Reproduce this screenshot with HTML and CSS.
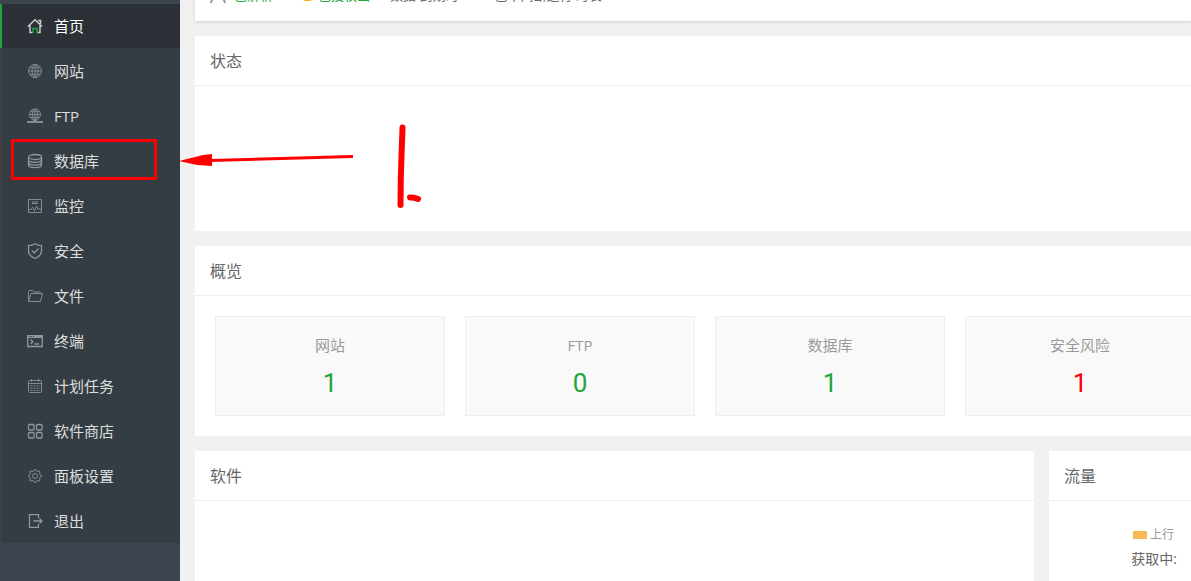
FILE: index.html
```
<!DOCTYPE html>
<html lang="zh-CN">
<head>
    <meta charset="UTF-8">
    <meta name="viewport" content="width=device-width, initial-scale=1.0">
    <title>首页</title>
    <link rel="stylesheet" href="styles.css">
</head>
<body>
    <div class="layout">
        <!-- Sidebar menu -->
        <nav class="sidebar">
            <ul class="menu">
                <li><a class="menu-item active" href="#">
                    <svg class="icon" viewBox="0 0 16 16"><path d="M1 8.500 8 1.800 15 8.500M3 7.500V14.500H5.500M13 7.500V14.500H10.500M11 2.500H13.500V6"/><path class="door" d="M6 15V10.500H10V15"/></svg>
                    <span>首页</span></a></li>
                <li><a class="menu-item" href="#">
                    <svg class="icon" viewBox="0 0 16 16"><circle cx="8" cy="8" r="6.500"/><ellipse cx="8" cy="8" rx="3" ry="6.500"/><path d="M8 1.500V14.500M1.500 8H14.500M2.500 4.700H13.500M2.500 11.300H13.500"/></svg>
                    <span>网站</span></a></li>
                <li><a class="menu-item" href="#">
                    <svg class="icon" viewBox="0 0 16 16"><circle cx="8" cy="6.500" r="5.500"/><ellipse cx="8" cy="6.500" rx="2.500" ry="5.500"/><path d="M8 1V12M2.500 6.500H13.500M3.500 3.700H12.500M3.500 9.300H12.500"/><path class="bold" d="M0 14H16M6 13H10"/></svg>
                    <span>FTP</span></a></li>
                <li><a class="menu-item" href="#">
                    <svg class="icon" viewBox="0 0 16 16"><g class="strong"><ellipse cx="8" cy="4" rx="6.500" ry="2.500"/><path d="M1.500 4V12C1.500 15.500 14.500 15.500 14.500 12V4M1.500 6.700C1.500 10.200 14.500 10.200 14.500 6.700M1.500 9.400C1.500 12.900 14.500 12.900 14.500 9.400"/></g></svg>
                    <span>数据库</span></a></li>
                <li><a class="menu-item" href="#">
                    <svg class="icon" viewBox="0 0 16 16"><path d="M1.500 1.500H14.500V14.500H1.500ZM5 4H11M5 5.500H11M2 11.500H4L5.500 9 7.500 13 9.500 8 11 11.500 12 10.500 14 11.500"/></svg>
                    <span>监控</span></a></li>
                <li><a class="menu-item" href="#">
                    <svg class="icon" viewBox="0 0 16 16"><path class="strong" d="M8 .7C6 2 4 2.500 1.500 2.700V8C1.500 11.500 4.500 14 8 15.500 11.500 14 14.500 11.500 14.500 8V2.700C12 2.500 10 2 8 .7ZM4.800 7.500 7.200 10 11.500 5.500"/></svg>
                    <span>安全</span></a></li>
                <li><a class="menu-item" href="#">
                    <svg class="icon" viewBox="0 0 16 16"><path d="M1.500 13.500V3.500Q1.500 2.500 2.500 2.500H5.500L7 4H12.500Q13.500 4 13.500 5.500M1.500 13.500 4 5.500H15.500L13.500 13.500Z"/></svg>
                    <span>文件</span></a></li>
                <li><a class="menu-item" href="#">
                    <svg class="icon" viewBox="0 0 16 16"><path class="fill" d="M0 2H16V5H0Z"/><path class="strong" d="M.7 3V13.500H15.300V3M3.500 6.500 6 8.700 3.500 11M7.500 11H12"/><path class="dots" d="M2 3.500H3M4 3.500H5M6 3.500H7"/></svg>
                    <span>终端</span></a></li>
                <li><a class="menu-item" href="#">
                    <svg class="icon" viewBox="0 0 16 16"><rect x="1.500" y="2.500" width="13" height="12" rx="1"/><path d="M1.500 5.500H14.500M4.500 1V4M11.500 1V4"/><path class="dashed" d="M3.500 8H13M3.500 10.300H13M3.500 12.500H13"/></svg>
                    <span>计划任务</span></a></li>
                <li><a class="menu-item" href="#">
                    <svg class="icon" viewBox="0 0 16 16"><g class="strong"><rect x="1.500" y="1.500" width="5.500" height="5.500" rx="1"/><rect x="9.500" y="1.500" width="5.500" height="5.500" rx="1"/><rect x="1.500" y="9.500" width="5.500" height="5.500" rx="1"/><rect x="9.500" y="9.500" width="5.500" height="5.500" rx="1"/></g></svg>
                    <span>软件商店</span></a></li>
                <li><a class="menu-item" href="#">
                    <svg class="icon" viewBox="0 0 16 16"><path d="M8 1 9.700 3.300 12.900 3.100 12.700 6.300 15 8 12.700 9.700 12.900 12.900 9.700 12.700 8 15 6.300 12.700 3.100 12.900 3.300 9.700 1 8 3.300 6.300 3.100 3.100 6.300 3.300Z"/><circle cx="8" cy="8" r="2.500"/></svg>
                    <span>面板设置</span></a></li>
                <li><a class="menu-item" href="#">
                    <svg class="icon" viewBox="0 0 16 16"><path class="strong" d="M11.500 5V1.700H2.500V14.300H11.500V11M6.500 8H15M12.500 5.500 15 8 12.500 10.500"/></svg>
                    <span>退出</span></a></li>
            </ul>
        </nav>

        <main class="content">
            <!-- Account bar -->
            <header class="topbar">
                <svg class="user" viewBox="0 0 16 16"><circle cx="8" cy="5" r="4"/><path d="M1 16Q2 10 8 10T15 16"/></svg>
                <span class="green">已解析</span>
                <span class="badge"></span>
                <a class="green" href="#">已授权画</a>
                <span class="info">数据 到期时</span>
                <span class="info">已不间断运行 时长</span>
            </header>

            <section class="panel">
                <h2>状态</h2>
                <div class="status-body"></div>
            </section>

            <section class="panel">
                <h2>概览</h2>
                <div class="overview">
                    <a class="stat" href="#"><span>网站</span><strong>1</strong></a>
                    <a class="stat" href="#"><span>FTP</span><strong>0</strong></a>
                    <a class="stat" href="#"><span>数据库</span><strong>1</strong></a>
                    <a class="stat risk" href="#"><span>安全风险</span><strong>1</strong></a>
                </div>
            </section>

            <div class="columns">
                <section class="panel">
                    <h2>软件</h2>
                </section>
                <section class="panel traffic">
                    <h2>流量</h2>
                    <div class="traffic-body">
                        <div class="legend"><i class="swatch"></i>上行</div>
                        <div>获取中:</div>
                    </div>
                </section>
            </div>
        </main>
    </div>

    <!-- Step marks drawn over the page -->
    <svg class="marks" width="430" height="220" viewBox="0 0 430 220" aria-hidden="true">
        <rect x="12.500" y="140.500" width="143" height="38"/>
        <path d="M210 160.500 353 156.500"/>
        <path class="head" d="M179 161 203 155 212 154V166L197 165Z"/>
        <path class="brush" d="M402.500 127.500C402 150 400.500 165 400.500 205M410 197.500Q414 197 418 199"/>
    </svg>
</body>
</html>
```
FILE: styles.css
```
* {
    box-sizing: border-box;
}

body {
    margin: 0;
    background-color: #f1f1f1;
    color: #666;
    font-family: "Open Sans", "Noto Sans CJK SC", sans-serif;
    font-size: 15px;
    overflow: hidden;
}

a {
    color: inherit;
    text-decoration: none;
}

.layout {
    display: flex;
    height: 100vh;
}

/* Sidebar */
.sidebar {
    flex: 0 0 180px;
    padding-top: 4px;
    background-color: #3c444d;
}

.menu {
    display: grid;
    gap: 1px;
    margin: 0;
    padding: 0;
    list-style: none;
    background-color: #353d44;
}

.menu-item {
    display: flex;
    align-items: center;
    gap: 11px;
    height: 44px;
    padding-left: 25px;
    border-left: 2px solid #423f3e;
    color: #ddd;
    line-height: 44px;
}

.menu-item.active {
    border-left-color: #20a53a;
    background-color: #2c3138;
    color: #fff;
}

.icon {
    width: 16px;
    height: 16px;
    fill: none;
    stroke: #868b8f;
}

.active .icon {
    stroke: #ccc;
    stroke-width: 1.5;
}

.icon .door {
    stroke: #20a53a;
}

.icon .bold {
    stroke-width: 2;
}

.icon .strong {
    stroke: #929699;
    stroke-width: 1.3;
}

.icon .fill {
    fill: #929699;
    stroke: none;
}

.icon .dots {
    stroke: #353d44;
}

.icon .dashed {
    stroke-dasharray: 2 1;
}

/* Main content, scrolled a little way down */
.content {
    display: flex;
    flex: 1;
    flex-direction: column;
    gap: 15px;
    min-width: 0;
    margin-top: -39px;
    padding-left: 15px;
}

.topbar {
    display: flex;
    align-items: center;
    flex: 0 0 60px;
    padding: 7px 0 0 15px;
    background-color: #fff;
    box-shadow: 0 1px 3px rgba(0, 0, 0, 0.15);
    font-size: 13px;
    white-space: nowrap;
}

.user {
    width: 16px;
    height: 18px;
    margin-right: 8px;
    fill: none;
    stroke: #999;
    stroke-width: 2;
}

.green {
    color: #20a53a;
}

.badge {
    width: 13px;
    height: 13px;
    margin: 0 4px 0 28px;
    border-radius: 5px;
    background-color: #f8a71c;
}

.info {
    margin-left: 20px;
}

.info + .info {
    margin-left: 36px;
}

/* Panels */
.panel {
    background-color: #fff;
}

.panel h2 {
    height: 50px;
    margin: 0;
    padding-left: 15px;
    border-bottom: 1px solid #eee;
    font-size: 16px;
    font-weight: normal;
    line-height: 50px;
}

.status-body {
    height: 145px;
}

.overview {
    display: flex;
    gap: 20px;
    padding: 20px;
    overflow: hidden;
}

.stat {
    display: flex;
    flex: 0 0 230px;
    flex-direction: column;
    align-items: center;
    height: 100px;
    padding-top: 17px;
    border: 1px solid #eee;
    background-color: #f9f9f9;
    color: #999;
    line-height: 22px;
}

.stat strong {
    margin-top: 9px;
    color: #20a53a;
    font-family: Roboto, Arial, sans-serif;
    font-size: 26px;
    font-weight: normal;
    line-height: 36px;
}

.stat.risk strong {
    color: #f00;
}

.columns {
    display: grid;
    flex: 1;
    grid-template-columns: minmax(0, 1fr) 142px;
    gap: 15px;
}

.traffic-body {
    padding: 22px 14px 0 0;
    font-size: 14px;
    line-height: 24px;
    text-align: right;
}

.legend {
    display: flex;
    align-items: center;
    justify-content: flex-end;
    gap: 3px;
    padding-right: 3px;
    color: #999;
    font-size: 12px;
}

.swatch {
    width: 14px;
    height: 8px;
    background-color: #f7b851;
}

/* Step marks */
.marks {
    position: absolute;
    top: 0;
    left: 0;
    fill: none;
    stroke: #f00;
    stroke-width: 3;
    pointer-events: none;
}

.marks .head {
    fill: #f00;
    stroke: none;
}

.marks .brush {
    stroke-width: 6;
    stroke-linecap: round;
}
```
